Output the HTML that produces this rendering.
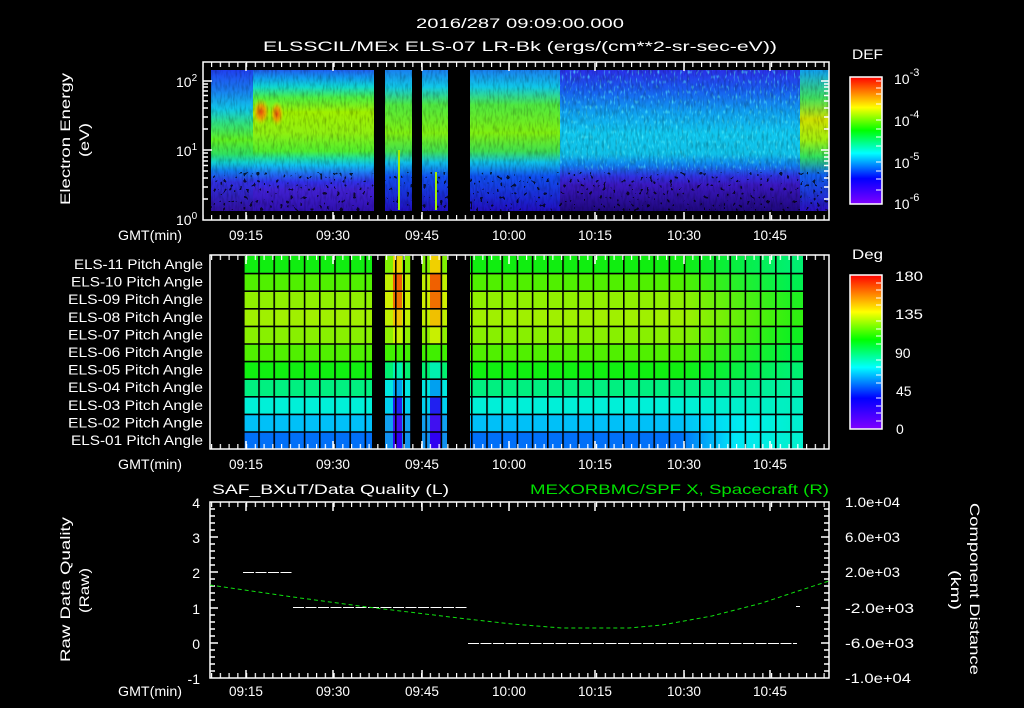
<!DOCTYPE html>
<html><head><meta charset="utf-8"><style>
html,body{margin:0;padding:0;background:#000;}
svg{display:block;}
text{font-family:"Liberation Sans",sans-serif;fill:#fff;font-size:14px;}
</style></head><body>
<svg width="1024" height="708" viewBox="0 0 1024 708" xmlns="http://www.w3.org/2000/svg">
<defs>
<linearGradient id="gA" x1="0" y1="70" x2="0" y2="210" gradientUnits="userSpaceOnUse">
<stop offset="0" stop-color="#2060f0"/><stop offset="0.06" stop-color="#10a0f0"/><stop offset="0.12" stop-color="#10d8d0"/>
<stop offset="0.2" stop-color="#50f040"/><stop offset="0.3" stop-color="#a0f000"/><stop offset="0.45" stop-color="#90f010"/>
<stop offset="0.58" stop-color="#50f030"/><stop offset="0.63" stop-color="#20e0a0"/><stop offset="0.68" stop-color="#10c0f0"/>
<stop offset="0.74" stop-color="#2070f0"/><stop offset="0.8" stop-color="#3030e8"/><stop offset="0.86" stop-color="#4020d0"/>
<stop offset="1" stop-color="#3010b0"/></linearGradient>
<linearGradient id="gL" x1="0" y1="70" x2="0" y2="210" gradientUnits="userSpaceOnUse">
<stop offset="0" stop-color="#2040f0"/><stop offset="0.15" stop-color="#1880f0"/><stop offset="0.28" stop-color="#10c8e8"/>
<stop offset="0.38" stop-color="#30e080"/><stop offset="0.5" stop-color="#60f020"/><stop offset="0.6" stop-color="#30e060"/>
<stop offset="0.66" stop-color="#10d0d0"/><stop offset="0.72" stop-color="#1080f0"/><stop offset="0.8" stop-color="#3030e0"/><stop offset="1" stop-color="#3010a0"/></linearGradient>
<linearGradient id="gB" x1="0" y1="70" x2="0" y2="210" gradientUnits="userSpaceOnUse">
<stop offset="0" stop-color="#2a30e8"/><stop offset="0.15" stop-color="#1860f0"/><stop offset="0.3" stop-color="#10a0f0"/>
<stop offset="0.45" stop-color="#10c8f0"/><stop offset="0.6" stop-color="#10c0e8"/><stop offset="0.68" stop-color="#1080f0"/>
<stop offset="0.76" stop-color="#3030e0"/><stop offset="0.82" stop-color="#3a18c0"/><stop offset="1" stop-color="#200880"/></linearGradient>
<linearGradient id="gC" x1="0" y1="70" x2="0" y2="210" gradientUnits="userSpaceOnUse">
<stop offset="0" stop-color="#1a80f0"/><stop offset="0.12" stop-color="#10c8e8"/><stop offset="0.25" stop-color="#50e840"/>
<stop offset="0.45" stop-color="#80f010"/><stop offset="0.58" stop-color="#40e050"/><stop offset="0.66" stop-color="#10c0e8"/>
<stop offset="0.76" stop-color="#1050f0"/><stop offset="1" stop-color="#2010c0"/></linearGradient>
<linearGradient id="gD" x1="0" y1="70" x2="0" y2="210" gradientUnits="userSpaceOnUse">
<stop offset="0" stop-color="#10a0f0"/><stop offset="0.2" stop-color="#40e060"/><stop offset="0.35" stop-color="#d0e000"/>
<stop offset="0.5" stop-color="#a0f010"/><stop offset="0.62" stop-color="#30e060"/><stop offset="0.75" stop-color="#1060f0"/>
<stop offset="1" stop-color="#2a10c0"/></linearGradient>
<radialGradient id="or" cx="0.5" cy="0.5" r="0.5">
<stop offset="0" stop-color="#f05010"/><stop offset="0.5" stop-color="#f0a000" stop-opacity="0.85"/><stop offset="1" stop-color="#c0f000" stop-opacity="0"/></radialGradient>
<linearGradient id="cb" x1="0" y1="0" x2="0" y2="1">
<stop offset="0" stop-color="#ff0000"/><stop offset="0.12" stop-color="#ff8000"/><stop offset="0.24" stop-color="#ffff00"/>
<stop offset="0.42" stop-color="#00ff00"/><stop offset="0.6" stop-color="#00ffff"/><stop offset="0.8" stop-color="#0000ff"/>
<stop offset="1" stop-color="#8000ff"/></linearGradient>
<pattern id="tk" x="1" y="0" width="8.75" height="1000" patternUnits="userSpaceOnUse"><rect x="0" y="0" width="1.2" height="1000" fill="#fff"/></pattern>
<pattern id="grid" x="243" y="0" width="15.2" height="800" patternUnits="userSpaceOnUse"><rect x="0" y="0" width="1.6" height="800" fill="#000"/></pattern>
<filter id="nz" x="0" y="0" width="100%" height="100%">
<feTurbulence type="fractalNoise" baseFrequency="0.45 0.12" numOctaves="2" seed="3"/>
<feColorMatrix type="matrix" values="0 0 0 0 0  0 0 0 0 0  0 0 0 0 0  1.6 0 0 0 -0.7"/>
</filter>
<filter id="nz2" x="0" y="0" width="100%" height="100%">
<feTurbulence type="fractalNoise" baseFrequency="0.3 0.25" numOctaves="1" seed="7"/>
<feComponentTransfer><feFuncR type="discrete" tableValues="0 0 1"/></feComponentTransfer>
<feColorMatrix type="matrix" values="0 0 0 0 0  0 0 0 0 0  0 0 0 0 0  1 0 0 0 0"/>
</filter>
<filter id="nz3" x="0" y="0" width="100%" height="100%">
<feTurbulence type="fractalNoise" baseFrequency="0.5 0.2" numOctaves="1" seed="11"/>
<feColorMatrix type="matrix" values="0 0 0 0 0.1  0 0 0 0 0.9  0 0 0 0 1  2.5 0 0 0 -1.4"/>
</filter>
<g id="edge">
<rect x="0" y="256" width="1" height="17.6" fill="#80f000"/>
<rect x="0" y="273.6" width="1" height="17.6" fill="#c0f000"/>
<rect x="0" y="291.2" width="1" height="17.6" fill="#d0f000"/>
<rect x="0" y="308.8" width="1" height="17.6" fill="#c0f000"/>
<rect x="0" y="326.4" width="1" height="17.6" fill="#90f000"/>
<rect x="0" y="344" width="1" height="17.6" fill="#40f000"/>
<rect x="0" y="361.6" width="1" height="17.6" fill="#00f070"/>
<rect x="0" y="379.2" width="1" height="17.6" fill="#00e8e0"/>
<rect x="0" y="396.8" width="1" height="17.6" fill="#00d0f0"/>
<rect x="0" y="414.4" width="1" height="17.6" fill="#10a0f0"/>
<rect x="0" y="432" width="1" height="17" fill="#1090f0"/>
</g>
<g id="ctr">
<rect x="0" y="256" width="1" height="17.6" fill="#f0d000"/>
<rect x="0" y="273.6" width="1" height="17.6" fill="#f06000"/>
<rect x="0" y="291.2" width="1" height="17.6" fill="#f07000"/>
<rect x="0" y="308.8" width="1" height="17.6" fill="#f0c000"/>
<rect x="0" y="326.4" width="1" height="17.6" fill="#c8f000"/>
<rect x="0" y="344" width="1" height="17.6" fill="#40f000"/>
<rect x="0" y="361.6" width="1" height="17.6" fill="#00f0b0"/>
<rect x="0" y="379.2" width="1" height="17.6" fill="#00a0f0"/>
<rect x="0" y="396.8" width="1" height="17.6" fill="#2020f0"/>
<rect x="0" y="414.4" width="1" height="17.6" fill="#4010f0"/>
<rect x="0" y="432" width="1" height="17" fill="#3000f0"/>
</g>
<linearGradient id="r1" x1="680" x2="790" gradientUnits="userSpaceOnUse"><stop offset="0" stop-color="#10ee10"/><stop offset="1" stop-color="#00f070"/></linearGradient>
<linearGradient id="r2" x1="680" x2="790" gradientUnits="userSpaceOnUse"><stop offset="0" stop-color="#50f000"/><stop offset="1" stop-color="#00f050"/></linearGradient>
<linearGradient id="r3" x1="680" x2="790" gradientUnits="userSpaceOnUse"><stop offset="0" stop-color="#90f000"/><stop offset="1" stop-color="#20f020"/></linearGradient>
<linearGradient id="r4" x1="680" x2="790" gradientUnits="userSpaceOnUse"><stop offset="0" stop-color="#a0f000"/><stop offset="1" stop-color="#30f010"/></linearGradient>
<linearGradient id="r5" x1="680" x2="790" gradientUnits="userSpaceOnUse"><stop offset="0" stop-color="#88f000"/><stop offset="1" stop-color="#10f020"/></linearGradient>
<linearGradient id="r6" x1="680" x2="790" gradientUnits="userSpaceOnUse"><stop offset="0" stop-color="#50f000"/><stop offset="1" stop-color="#00f040"/></linearGradient>
<linearGradient id="r7" x1="680" x2="790" gradientUnits="userSpaceOnUse"><stop offset="0" stop-color="#10f010"/><stop offset="1" stop-color="#00f070"/></linearGradient>
<linearGradient id="r8" x1="680" x2="790" gradientUnits="userSpaceOnUse"><stop offset="0" stop-color="#00f080"/><stop offset="1" stop-color="#00f0a0"/></linearGradient>
<linearGradient id="r9" x1="680" x2="790" gradientUnits="userSpaceOnUse"><stop offset="0" stop-color="#00f0d8"/><stop offset="1" stop-color="#00f0c0"/></linearGradient>
<linearGradient id="r10" x1="680" x2="790" gradientUnits="userSpaceOnUse"><stop offset="0" stop-color="#00c0f8"/><stop offset="0.6" stop-color="#00f0f0"/><stop offset="1" stop-color="#00f0d0"/></linearGradient>
<linearGradient id="r11" x1="680" x2="790" gradientUnits="userSpaceOnUse"><stop offset="0" stop-color="#0070f8"/><stop offset="0.5" stop-color="#00e8f8"/><stop offset="1" stop-color="#00f0d0"/></linearGradient>
</defs>

<!-- titles -->
<text x="416" y="28" font-size="15" textLength="208" lengthAdjust="spacingAndGlyphs">2016/287 09:09:00.000</text>
<text x="263" y="51" font-size="15" textLength="514" lengthAdjust="spacingAndGlyphs">ELSSCIL/MEx ELS-07 LR-Bk  (ergs/(cm**2-sr-sec-eV))</text>

<!-- PANEL 1 -->
<rect x="211" y="70" width="163" height="141" fill="url(#gA)"/>
<rect x="211" y="70" width="42" height="141" fill="url(#gL)"/>
<ellipse cx="261" cy="112" rx="9" ry="14" fill="url(#or)"/>
<ellipse cx="277" cy="114" rx="7" ry="13" fill="url(#or)"/>
<rect x="385" y="70" width="27" height="141" fill="url(#gC)"/>
<rect x="422" y="70" width="26" height="141" fill="url(#gC)"/>
<rect x="470" y="70" width="359" height="141" fill="url(#gB)"/>
<rect x="470" y="70" width="90" height="141" fill="url(#gC)"/>
<rect x="800" y="70" width="29" height="141" fill="url(#gD)"/>
<rect x="560" y="70" width="240" height="100" filter="url(#nz3)"/>
<rect x="211" y="70" width="618" height="141" filter="url(#nz)" opacity="0.35"/>
<rect x="211" y="172" width="618" height="39" filter="url(#nz2)" opacity="0.75"/>
<rect x="374" y="62" width="11" height="150" fill="#000"/>
<rect x="412" y="62" width="10" height="150" fill="#000"/>
<rect x="448" y="62" width="22" height="150" fill="#000"/>
<rect x="398" y="150" width="2" height="60" fill="#a0f000"/>
<rect x="435" y="172" width="2" height="38" fill="#a0f000"/>
<!-- frame 1 -->
<rect x="203" y="62" width="626" height="158" fill="none" stroke="#fff" stroke-width="1.5"/>
<rect x="203" y="62" width="626" height="5" fill="url(#tk)"/>
<rect x="203" y="215" width="626" height="5" fill="url(#tk)"/>
<g stroke="#fff" stroke-width="1.5">
<path d="M246 63v8M333 63v8M422 63v8M509 63v8M595 63v8M684 63v8M770 63v8M246 220v-8M333 220v-8M422 220v-8M509 220v-8M595 220v-8M684 220v-8M770 220v-8"/>
<path d="M203 81h9M203 150h9M821 81h8M821 150h8"/>
<path d="M203 199h5M203 187h5M203 178h5M203 171h5M203 165.5h5M203 161h5M203 157h5M203 153h5M203 129h5M203 117h5M203 108h5M203 101h5M203 95.5h5M203 91h5M203 87h5M203 84h5"/>
<path d="M824 199h5M824 187h5M824 178h5M824 171h5M824 165.5h5M824 161h5M824 157h5M824 153h5M824 129h5M824 117h5M824 108h5M824 101h5M824 95.5h5M824 91h5M824 87h5M824 84h5"/>
</g>
<text x="176" y="225" font-size="14">10<tspan dy="-6" font-size="10">0</tspan></text>
<text x="176" y="156" font-size="14">10<tspan dy="-6" font-size="10">1</tspan></text>
<text x="176" y="87" font-size="14">10<tspan dy="-6" font-size="10">2</tspan></text>
<text transform="translate(70,205) rotate(-90)" font-size="15" textLength="132" lengthAdjust="spacingAndGlyphs">Electron Energy</text>
<text transform="translate(89,157) rotate(-90)" font-size="15" textLength="34" lengthAdjust="spacingAndGlyphs">(eV)</text>
<g font-size="14">
<text x="118" y="240" textLength="64" lengthAdjust="spacingAndGlyphs">GMT(min)</text>
<text x="229" y="240" textLength="34" lengthAdjust="spacingAndGlyphs">09:15</text><text x="316" y="240" textLength="34" lengthAdjust="spacingAndGlyphs">09:30</text><text x="405" y="240" textLength="34" lengthAdjust="spacingAndGlyphs">09:45</text><text x="492" y="240" textLength="34" lengthAdjust="spacingAndGlyphs">10:00</text><text x="578" y="240" textLength="34" lengthAdjust="spacingAndGlyphs">10:15</text><text x="667" y="240" textLength="34" lengthAdjust="spacingAndGlyphs">10:30</text><text x="753" y="240" textLength="34" lengthAdjust="spacingAndGlyphs">10:45</text>
</g>
<!-- colorbar 1 -->
<text x="852" y="59" font-size="16" textLength="31" lengthAdjust="spacingAndGlyphs">DEF</text>
<rect x="850" y="77" width="32" height="127" fill="url(#cb)" stroke="#fff" stroke-width="1.5"/>
<g stroke="#fff" stroke-width="1"><path d="M876 81h5M876 88h5M876 94h5M876 104h5M876 120h5M876 129h5M876 137h5M876 146h5M876 162h5M876 171h5M876 179h5M876 190h5"/></g>
<g font-size="16"><text x="894" y="84">10<tspan dy="-8" font-size="11">-3</tspan></text>
<text x="894" y="126">10<tspan dy="-8" font-size="11">-4</tspan></text>
<text x="894" y="168">10<tspan dy="-8" font-size="11">-5</tspan></text>
<text x="894" y="209">10<tspan dy="-8" font-size="11">-6</tspan></text></g>

<!-- PANEL 2 -->
<g>
<rect x="243" y="256" width="129" height="17.6" fill="#10ee10"/>
<rect x="243" y="273.6" width="129" height="17.6" fill="#50f000"/>
<rect x="243" y="291.2" width="129" height="17.6" fill="#90f000"/>
<rect x="243" y="308.8" width="129" height="17.6" fill="#a0f000"/>
<rect x="243" y="326.4" width="129" height="17.6" fill="#88f000"/>
<rect x="243" y="344" width="129" height="17.6" fill="#50f000"/>
<rect x="243" y="361.6" width="129" height="17.6" fill="#10f010"/>
<rect x="243" y="379.2" width="129" height="17.6" fill="#00f080"/>
<rect x="243" y="396.8" width="129" height="17.6" fill="#00f0d8"/>
<rect x="243" y="414.4" width="129" height="17.6" fill="#00c0f8"/>
<rect x="243" y="432" width="129" height="17" fill="#0070f8"/>
</g>
<use href="#edge" transform="translate(385,0) scale(8,1)"/>
<use href="#ctr" transform="translate(393,0) scale(9,1)"/>
<use href="#edge" transform="translate(402,0) scale(1,1)"/>
<use href="#edge" transform="translate(405,0) scale(6,1)"/>
<use href="#edge" transform="translate(422,0) scale(8,1)"/>
<use href="#ctr" transform="translate(430,0) scale(11,1)"/>
<use href="#edge" transform="translate(441,0) scale(6,1)"/>
<rect x="470" y="256" width="333" height="17.6" fill="url(#r1)"/>
<rect x="470" y="273.6" width="333" height="17.6" fill="url(#r2)"/>
<rect x="470" y="291.2" width="333" height="17.6" fill="url(#r3)"/>
<rect x="470" y="308.8" width="333" height="17.6" fill="url(#r4)"/>
<rect x="470" y="326.4" width="333" height="17.6" fill="url(#r5)"/>
<rect x="470" y="344" width="333" height="17.6" fill="url(#r6)"/>
<rect x="470" y="361.6" width="333" height="17.6" fill="url(#r7)"/>
<rect x="470" y="379.2" width="333" height="17.6" fill="url(#r8)"/>
<rect x="470" y="396.8" width="333" height="17.6" fill="url(#r9)"/>
<rect x="470" y="414.4" width="333" height="17.6" fill="url(#r10)"/>
<rect x="470" y="432" width="333" height="17" fill="url(#r11)"/>
<rect x="243" y="256" width="560" height="193" fill="url(#grid)"/>
<rect x="403" y="256" width="2" height="193" fill="#000"/>
<g stroke="#000" stroke-width="1.6"><path d="M243 273.6H803M243 291.2H803M243 308.8H803M243 326.4H803M243 344H803M243 361.6H803M243 379.2H803M243 396.8H803M243 414.4H803M243 432H803"/></g>
<rect x="210" y="255" width="619" height="194" fill="none" stroke="#fff" stroke-width="1.5"/>
<rect x="210" y="255" width="619" height="5" fill="url(#tk)"/>
<rect x="210" y="444" width="619" height="5" fill="url(#tk)"/>
<g stroke="#fff" stroke-width="1.5"><path d="M246 256v8M333 256v8M422 256v8M509 256v8M595 256v8M684 256v8M770 256v8M246 449v-8M333 449v-8M422 449v-8M509 449v-8M595 449v-8M684 449v-8M770 449v-8"/></g>
<g font-size="14">
<text x="74" y="269" textLength="129" lengthAdjust="spacingAndGlyphs">ELS-11 Pitch Angle</text>
<text x="71" y="286.6" textLength="132" lengthAdjust="spacingAndGlyphs">ELS-10 Pitch Angle</text>
<text x="68" y="304.2" textLength="135" lengthAdjust="spacingAndGlyphs">ELS-09 Pitch Angle</text>
<text x="68" y="321.8" textLength="135" lengthAdjust="spacingAndGlyphs">ELS-08 Pitch Angle</text>
<text x="68" y="339.4" textLength="135" lengthAdjust="spacingAndGlyphs">ELS-07 Pitch Angle</text>
<text x="68" y="357" textLength="135" lengthAdjust="spacingAndGlyphs">ELS-06 Pitch Angle</text>
<text x="68" y="374.6" textLength="135" lengthAdjust="spacingAndGlyphs">ELS-05 Pitch Angle</text>
<text x="68" y="392.2" textLength="135" lengthAdjust="spacingAndGlyphs">ELS-04 Pitch Angle</text>
<text x="68" y="409.8" textLength="135" lengthAdjust="spacingAndGlyphs">ELS-03 Pitch Angle</text>
<text x="68" y="427.4" textLength="135" lengthAdjust="spacingAndGlyphs">ELS-02 Pitch Angle</text>
<text x="71" y="445" textLength="132" lengthAdjust="spacingAndGlyphs">ELS-01 Pitch Angle</text>
</g>
<g font-size="14">
<text x="118" y="469" textLength="64" lengthAdjust="spacingAndGlyphs">GMT(min)</text>
<text x="229" y="469" textLength="34" lengthAdjust="spacingAndGlyphs">09:15</text><text x="316" y="469" textLength="34" lengthAdjust="spacingAndGlyphs">09:30</text><text x="405" y="469" textLength="34" lengthAdjust="spacingAndGlyphs">09:45</text><text x="492" y="469" textLength="34" lengthAdjust="spacingAndGlyphs">10:00</text><text x="578" y="469" textLength="34" lengthAdjust="spacingAndGlyphs">10:15</text><text x="667" y="469" textLength="34" lengthAdjust="spacingAndGlyphs">10:30</text><text x="753" y="469" textLength="34" lengthAdjust="spacingAndGlyphs">10:45</text>
</g>
<text x="852" y="259" font-size="16" textLength="31" lengthAdjust="spacingAndGlyphs">Deg</text>
<rect x="850" y="275" width="32" height="154" fill="url(#cb)" stroke="#fff" stroke-width="1.5"/>
<g stroke="#fff" stroke-width="1"><path d="M876 283h5M876 290h5M876 298h5M876 305h5M876 321h5M876 329h5M876 336h5M876 344h5M876 360h5M876 367h5M876 375h5M876 383h5M876 398h5M876 406h5M876 413h5M876 421h5"/></g>
<g font-size="16"><text x="895" y="281" textLength="28" lengthAdjust="spacingAndGlyphs">180</text><text x="895" y="319" textLength="28" lengthAdjust="spacingAndGlyphs">135</text><text x="895" y="358">90</text><text x="896" y="396">45</text><text x="896" y="434">0</text></g>

<!-- PANEL 3 -->
<text x="212" y="494" font-size="15" textLength="237" lengthAdjust="spacingAndGlyphs">SAF_BXuT/Data Quality (L)</text>
<text x="530" y="494" font-size="15" textLength="299" lengthAdjust="spacingAndGlyphs" style="fill:#00e000">MEXORBMC/SPF X, Spacecraft (R)</text>
<rect x="210" y="502" width="619" height="176" fill="none" stroke="#fff" stroke-width="1.5"/>
<rect x="210" y="502" width="619" height="5" fill="url(#tk)"/>
<rect x="210" y="673" width="619" height="5" fill="url(#tk)"/>
<g stroke="#fff" stroke-width="1.5"><path d="M246 503v8M333 503v8M422 503v8M509 503v8M595 503v8M684 503v8M770 503v8M246 678v-8M333 678v-8M422 678v-8M509 678v-8M595 678v-8M684 678v-8M770 678v-8"/>
<path d="M210 537h8M210 572h8M210 608h8M210 643h8M821 537h8M821 572h8M821 608h8M821 643h8"/>
<path d="M210 509h5M210 516h5M210 523h5M210 530h5M210 544h5M210 551h5M210 558h5M210 565h5M210 579h5M210 586h5M210 593h5M210 600h5M210 615h5M210 622h5M210 629h5M210 636h5M210 650h5M210 657h5M210 664h5M210 671h5"/>
<path d="M824 509h5M824 516h5M824 523h5M824 530h5M824 544h5M824 551h5M824 558h5M824 565h5M824 579h5M824 586h5M824 593h5M824 600h5M824 615h5M824 622h5M824 629h5M824 636h5M824 650h5M824 657h5M824 664h5M824 671h5"/>
</g>
<g stroke="#fff" stroke-width="1" stroke-dasharray="11,1.5" fill="none">
<path d="M243 572.5H292M293 607.5H467M468 643.5H797M796 606.5h4"/>
</g>
<path d="M210 585L293 597L367 607L467 619L512 624L562 628L629 628L662 625L712 616L762 603L795 592L829 581" fill="none" stroke="#10e010" stroke-width="1" stroke-dasharray="4,3"/>
<g font-size="15" text-anchor="end">
<text x="200" y="508">4</text><text x="200" y="543">3</text><text x="200" y="578">2</text><text x="200" y="614">1</text><text x="200" y="649">0</text><text x="200" y="684">-1</text>
</g>
<g font-size="14">
<text x="845" y="507" textLength="55" lengthAdjust="spacingAndGlyphs">1.0e+04</text><text x="845" y="542" textLength="55" lengthAdjust="spacingAndGlyphs">6.0e+03</text><text x="845" y="577" textLength="55" lengthAdjust="spacingAndGlyphs">2.0e+03</text><text x="845" y="613" textLength="69" lengthAdjust="spacingAndGlyphs">-2.0e+03</text><text x="845" y="648" textLength="69" lengthAdjust="spacingAndGlyphs">-6.0e+03</text><text x="845" y="683" textLength="66" lengthAdjust="spacingAndGlyphs">-1.0e+04</text>
</g>
<text transform="translate(70,662) rotate(-90)" font-size="15" textLength="145" lengthAdjust="spacingAndGlyphs">Raw Data Quality</text>
<text transform="translate(89,613) rotate(-90)" font-size="15" textLength="45" lengthAdjust="spacingAndGlyphs">(Raw)</text>
<text transform="translate(970,503) rotate(90)" font-size="15" textLength="172" lengthAdjust="spacingAndGlyphs">Component Distance</text>
<text transform="translate(951,570) rotate(90)" font-size="15" textLength="40" lengthAdjust="spacingAndGlyphs">(km)</text>
<g font-size="14">
<text x="118" y="696" textLength="64" lengthAdjust="spacingAndGlyphs">GMT(min)</text>
<text x="229" y="696" textLength="34" lengthAdjust="spacingAndGlyphs">09:15</text><text x="316" y="696" textLength="34" lengthAdjust="spacingAndGlyphs">09:30</text><text x="405" y="696" textLength="34" lengthAdjust="spacingAndGlyphs">09:45</text><text x="492" y="696" textLength="34" lengthAdjust="spacingAndGlyphs">10:00</text><text x="578" y="696" textLength="34" lengthAdjust="spacingAndGlyphs">10:15</text><text x="667" y="696" textLength="34" lengthAdjust="spacingAndGlyphs">10:30</text><text x="753" y="696" textLength="34" lengthAdjust="spacingAndGlyphs">10:45</text>
</g>
</svg>
</body></html>
